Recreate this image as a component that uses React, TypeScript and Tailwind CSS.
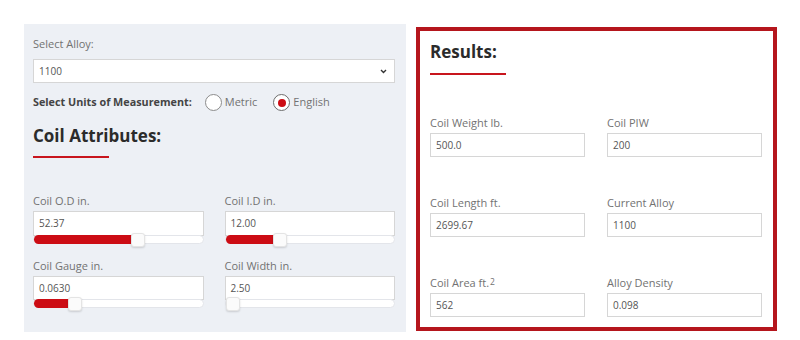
const sliders = {
  od: 0.62,
  id: 0.3,
  gauge: 0.22,
  width: 0,
};

function Slider({ value }: { value: number }) {
  const trackW = 170;
  const thumbW = 14;
  const left = Math.round(value * (trackW - thumbW));
  return (
    <div className="relative -mt-px h-[9px] w-full rounded-full border border-[#e3e5ea] bg-white">
      {value > 0 && (
        <div
          className="absolute -top-px left-0 h-[9px] rounded-l-full bg-[#cc0c14]"
          style={{ width: left + 4 }}
        />
      )}
      <div
        className="absolute -top-[3px] h-[14px] w-[14px] rounded-[3px] border border-[#e4e4e4] bg-[#fbfbfb] shadow-[0_1px_2px_rgba(0,0,0,0.15)]"
        style={{ left }}
      />
    </div>
  );
}

function Field({ label, value, sup, h = 'h-[25px]' }: { label: string; value: string; sup?: string; h?: string }) {
  return (
    <div className="flex flex-col">
      <div className="text-[11px] leading-[15px] text-[#727272]">
        {label}
        {sup && <sup className="relative -top-[2px] ml-px text-[8.5px]">{sup}</sup>}
      </div>
      <div className={`mt-[3px] flex ${h} items-center border border-[#d6d6d6] bg-white pl-[5px] text-[10px] text-[#555]`}>
        {value}
      </div>
    </div>
  );
}

function Radio({ checked, label }: { checked?: boolean; label: string }) {
  return (
    <div className="flex items-center gap-[3px]">
      <span
        className={`flex h-[17px] w-[17px] items-center justify-center rounded-full border bg-white ${
          checked ? 'border-[#6c6c6c]' : 'border-[#8c8c8c]'
        }`}
      >
        {checked && <span className="h-[8px] w-[8px] rounded-full bg-[#cc0c14]" />}
      </span>
      <span className="text-[11px] text-[#727272]">{label}</span>
    </div>
  );
}

export default function App() {
  return (
    <div className="flex h-[340px] w-[800px] gap-[10px] bg-white pl-[24px] pt-[24px] font-['Open_Sans',sans-serif]">
      {/* Inputs panel */}
      <div className="flex h-[308px] w-[382px] flex-col bg-[#edf0f5] pl-[9px] pr-[11px] pt-[12px]">
        <div className="text-[11px] leading-[15px] text-[#727272]">Select Alloy:</div>
        <div className="mt-[8px] flex h-[24px] items-center justify-between border border-[#d6d6d6] bg-white pl-[5px] pr-[7px] text-[10px] text-[#555]">
          <span>1100</span>
          <svg width="7" height="5" viewBox="0 0 7 5" fill="none">
            <path d="M1 1l2.5 2.5L6 1" stroke="#333" strokeWidth="1.4" />
          </svg>
        </div>
        <div className="mt-[11px] flex h-[17px] items-center">
          <span className="text-[10.8px] font-bold text-[#444]">Select Units of Measurement:</span>
          <div className="ml-[13px] flex items-center gap-[16px]">
            <Radio label="Metric" />
            <Radio checked label="English" />
          </div>
        </div>
        <h2 className="mt-[13px] text-[17px] font-bold leading-[24px] text-[#2b2b2b]">Coil Attributes:</h2>
        <div className="mt-[8px] h-[2px] w-[76px] bg-[#c8151d]" />

        <div className="mt-[35px] grid grid-cols-2 gap-x-[21px]">
          <div>
            <Field label="Coil O.D in." value="52.37" />
            <Slider value={sliders.od} />
          </div>
          <div>
            <Field label="Coil I.D in." value="12.00" />
            <Slider value={sliders.id} />
          </div>
          <div className="mt-[14px]">
            <Field label="Coil Gauge in." value="0.0630" h="h-[24px]" />
            <Slider value={sliders.gauge} />
          </div>
          <div className="mt-[14px]">
            <Field label="Coil Width in." value="2.50" h="h-[24px]" />
            <Slider value={sliders.width} />
          </div>
        </div>
      </div>

      {/* Results */}
      <div className="mt-[3px] flex h-[304px] w-[361px] flex-col border-4 border-[#b5161d] bg-white pl-[10px] pr-[11px] pt-[9px]">
        <h2 className="text-[17px] font-bold leading-[24px] text-[#2b2b2b]">Results:</h2>
        <div className="mt-[9px] h-[2px] w-[76px] bg-[#c8151d]" />
        <div className="mt-[40px] grid grid-cols-2 gap-x-[22px] gap-y-[38px]">
          <Field label="Coil Weight lb." value="500.0" h="h-[24px]" />
          <Field label="Coil PIW" value="200" h="h-[24px]" />
          <Field label="Coil Length ft." value="2699.67" h="h-[24px]" />
          <Field label="Current Alloy" value="1100" h="h-[24px]" />
          <Field label="Coil Area ft." sup="2" value="562" h="h-[24px]" />
          <Field label="Alloy Density" value="0.098" h="h-[24px]" />
        </div>
      </div>
    </div>
  );
}
